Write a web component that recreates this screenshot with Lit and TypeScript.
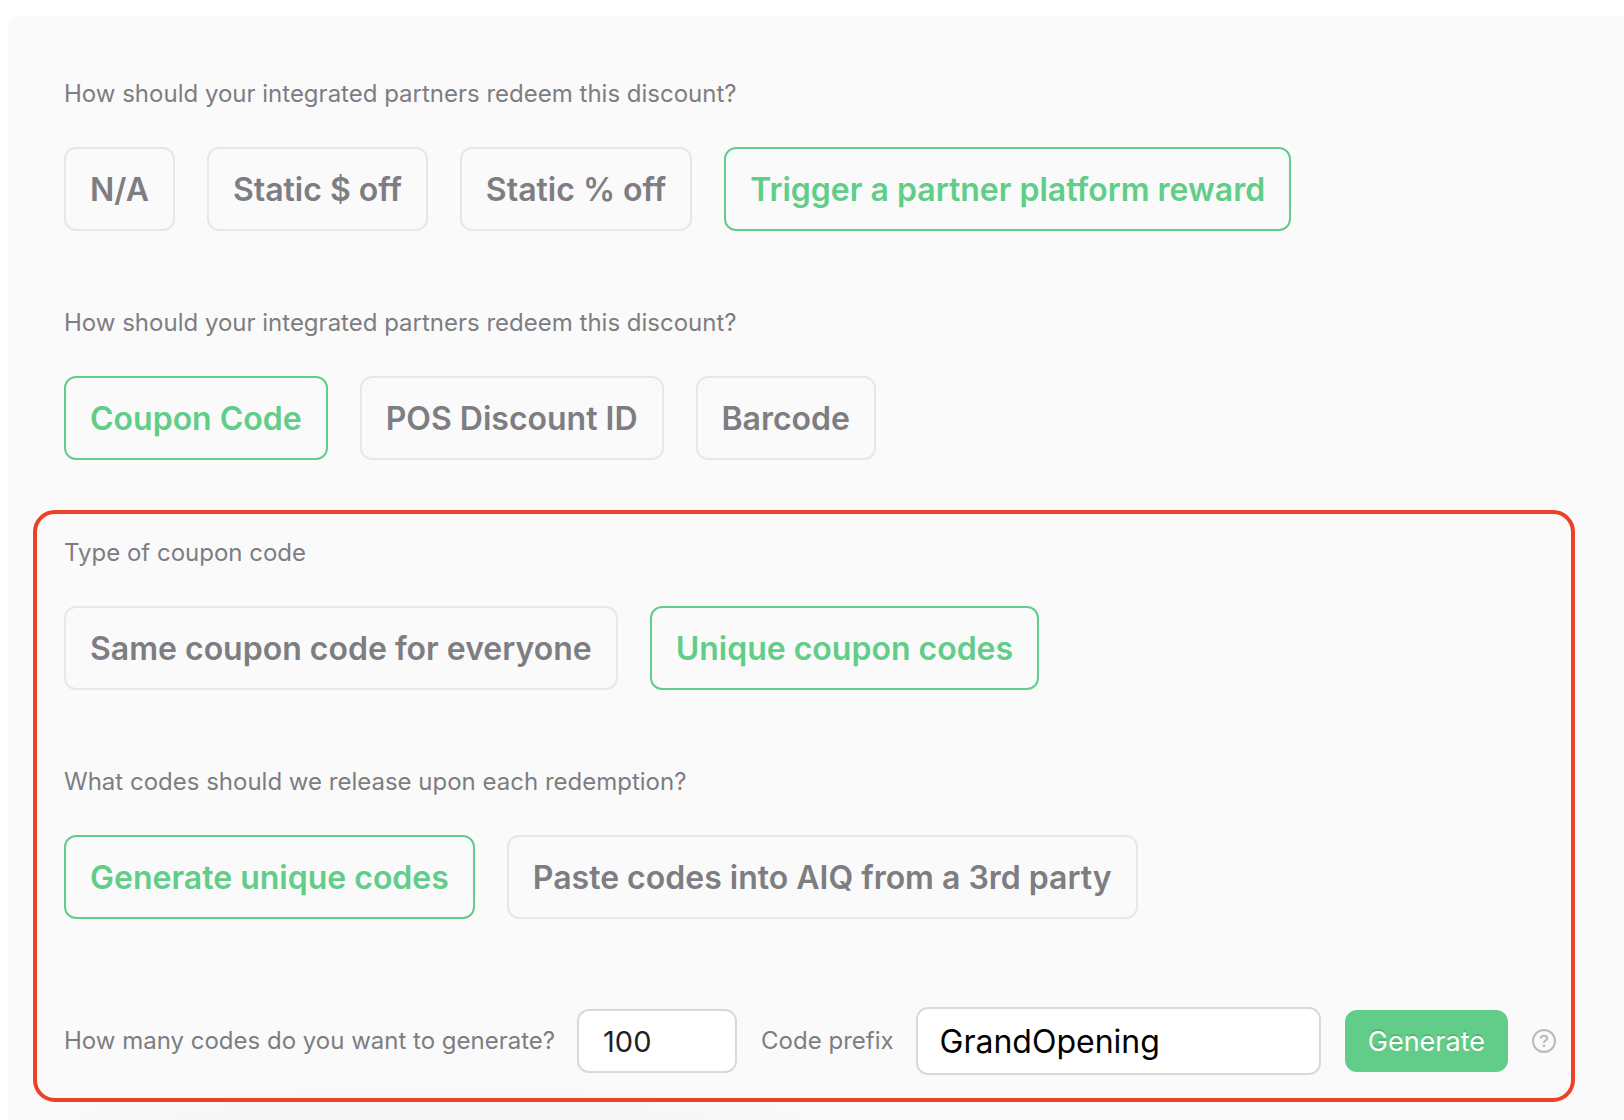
import { LitElement, html, css, svg } from "lit";
import { customElement, property, state } from "lit/decorators.js";
import { classMap } from "lit/directives/class-map.js";

const FONT = css`Inter, "Liberation Sans", sans-serif`;

/** A question with a row of mutually exclusive choices. */
@customElement("choice-group")
export class ChoiceGroup extends LitElement {
  @property() label = "";
  @property({ attribute: false }) options: string[] = [];
  @property() selected = "";

  static styles = css`
    :host {
      display: block;
      font-family: ${FONT};
    }
    .label {
      margin: 0 0 37px;
      font-size: 24px;
      line-height: 32px;
      font-weight: 400;
      color: #7d7d82;
    }
    .choices {
      display: flex;
      flex-wrap: wrap;
      gap: 32px;
    }
    .choice {
      box-sizing: border-box;
      min-height: 84px;
      padding: 2px 24px 0;
      border: 2px solid #e4e7ee;
      border-radius: 12px;
      background: transparent;
      color: #7d7d82;
      font-family: inherit;
      font-size: 32px;
      line-height: 40px;
      font-weight: 600;
      cursor: pointer;
    }
    .active {
      border-color: #61cd88;
      color: #61cd88;
    }
  `;

  render() {
    return html`
      <div role="group" aria-labelledby="label">
        <p class="label" id="label">${this.label}</p>
        <div class="choices">
          ${this.options.map((option) => {
            const active = option === this.selected;
            return html`<button
              type="button"
              class=${classMap({ choice: true, active })}
              aria-pressed=${active ? "true" : "false"}
              @click=${() => (this.selected = option)}
            >${option}</button>`;
          })}
        </div>
      </div>
    `;
  }
}

@customElement("app-root")
export class AppRoot extends LitElement {
  @state() private count = "100";
  @state() private prefix = "GrandOpening";

  static styles = css`
    :host {
      display: block;
      box-sizing: border-box;
      min-height: 100vh;
      padding: 16px 0 0 8px;
      background: #fff;
      font-family: ${FONT};
    }
    .panel {
      box-sizing: border-box;
      min-height: calc(100vh - 16px);
      padding: 62px 49px 0 25px;
      border-radius: 12px 0 0 0;
      background:
        radial-gradient(
          ellipse 450px 36px at 430px 100%,
          rgba(0, 0, 0, 0.02),
          rgba(0, 0, 0, 0.012) 60%,
          transparent
        ),
        #fafafa;
    }
    .questions {
      display: flex;
      flex-direction: column;
      gap: 76px;
      padding-left: 31px;
    }
    .frame {
      margin-top: 50px;
      padding: 23px 15px 23px 27px;
      border: 4px solid #ec4127;
      border-radius: 22px;
    }
    .frame .questions {
      padding-left: 0;
    }
    .generator {
      display: flex;
      align-items: center;
      gap: 24px;
      margin-top: 88px;
    }
    .pair {
      display: flex;
      align-items: center;
      gap: 22px;
    }
    .grow {
      flex: 1;
      min-width: 0;
    }
    .label {
      flex: none;
      font-size: 24px;
      line-height: 32px;
      color: #7d7d82;
    }
    .field {
      box-sizing: border-box;
      min-width: 0;
      border: 2px solid #d9d9d9;
      border-radius: 12px;
      background: #fff;
      font-family: inherit;
    }
    .count {
      width: 160px;
      height: 64px;
      padding: 0 24px;
      font-size: 29px;
      color: #222;
    }
    .prefix {
      flex: 1;
      height: 68px;
      padding: 0 22px;
      font-size: 32px;
      color: #000;
    }
    .generate {
      flex: none;
      height: 62px;
      padding: 0 23px;
      border: 0;
      border-radius: 12px;
      background: #61cd88;
      color: #fff;
      font-family: inherit;
      font-size: 27px;
      text-shadow: 0 -2px 0 rgba(0, 0, 0, 0.12);
      cursor: pointer;
    }
    .help {
      flex: none;
      display: flex;
      padding: 0;
      border: 0;
      background: none;
      color: #b9b8be;
      cursor: pointer;
    }
  `;

  render() {
    return html`
      <main class="panel">
        <div class="questions">
          <choice-group
            label="How should your integrated partners redeem this discount?"
            .options=${["N/A", "Static $ off", "Static % off", "Trigger a partner platform reward"]}
            selected="Trigger a partner platform reward"
          ></choice-group>
          <choice-group
            label="How should your integrated partners redeem this discount?"
            .options=${["Coupon Code", "POS Discount ID", "Barcode"]}
            selected="Coupon Code"
          ></choice-group>
        </div>
        <section class="frame">
          <div class="questions">
            <choice-group
              label="Type of coupon code"
              .options=${["Same coupon code for everyone", "Unique coupon codes"]}
              selected="Unique coupon codes"
            ></choice-group>
            <choice-group
              label="What codes should we release upon each redemption?"
              .options=${["Generate unique codes", "Paste codes into AIQ from a 3rd party"]}
              selected="Generate unique codes"
            ></choice-group>
          </div>
          <form class="generator" @submit=${(e: Event) => e.preventDefault()}>
            <div class="pair">
              <label class="label" for="count">How many codes do you want to generate?</label>
              <input
                class="field count"
                id="count"
                type="text"
                inputmode="numeric"
                .value=${this.count}
                @input=${(e: Event) => (this.count = (e.target as HTMLInputElement).value)}
              />
            </div>
            <div class="pair grow">
              <label class="label" for="prefix">Code prefix</label>
              <input
                class="field prefix"
                id="prefix"
                type="text"
                .value=${this.prefix}
                @input=${(e: Event) => (this.prefix = (e.target as HTMLInputElement).value)}
              />
            </div>
            <button class="generate" type="submit">Generate</button>
            <button class="help" type="button" aria-label="Help">
              <svg width="24" height="24" viewBox="0 0 24 24" fill="none" stroke="currentColor" aria-hidden="true">
                ${svg`
                  <circle cx="12" cy="12" r="11" stroke-width="2"></circle>
                  <path d="M8.7 9.6C8.8 7.8 10.2 6.8 12 6.8s3.2 1 3.2 2.6c0 2-3.2 2.1-3.2 4.4" stroke-width="2"></path>
                  <circle cx="12" cy="16.8" r="1.4" fill="currentColor" stroke="none"></circle>
                `}
              </svg>
            </button>
          </form>
        </section>
      </main>
    `;
  }
}
